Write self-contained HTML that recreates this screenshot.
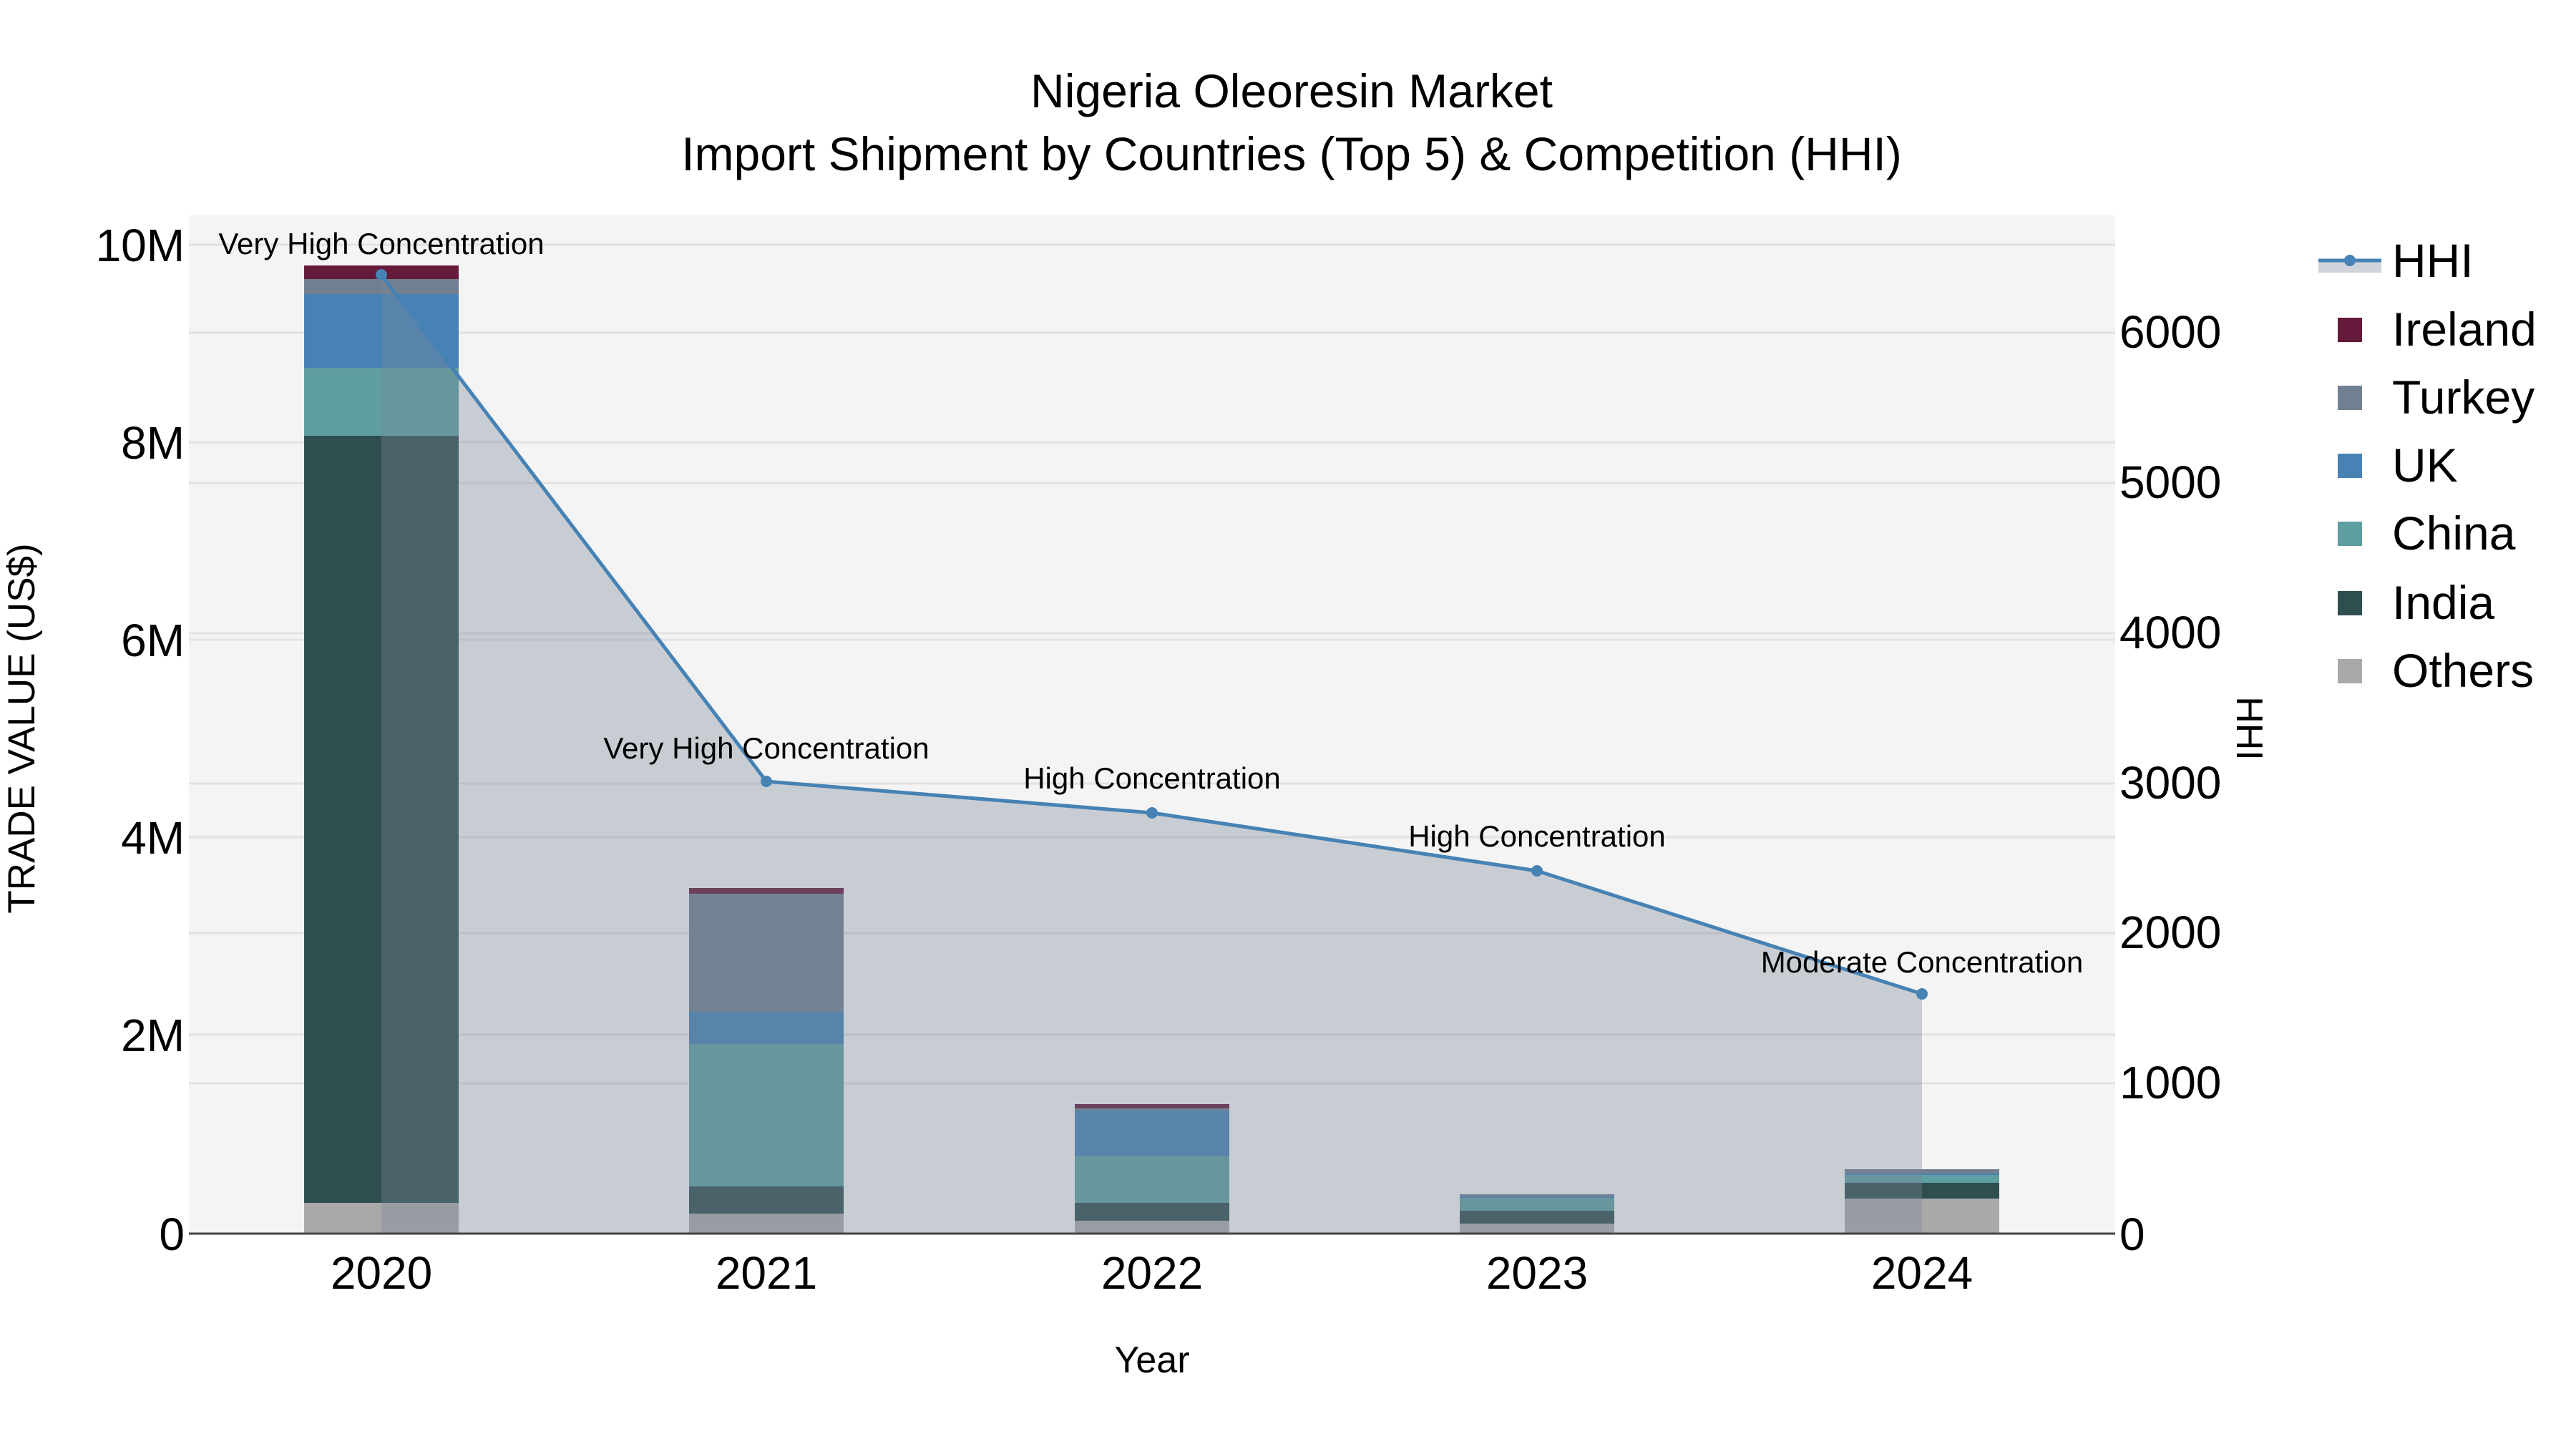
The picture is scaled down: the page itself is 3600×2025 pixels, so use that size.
<!DOCTYPE html>
<html><head><meta charset="utf-8"><style>
html,body{margin:0;padding:0;background:#fff}
svg{display:block}
text{font-family:"Liberation Sans",sans-serif;fill:#000}
</style></head><body>
<svg width="3600" height="2025" viewBox="0 0 3600 2025" xmlns="http://www.w3.org/2000/svg">
<rect width="3600" height="2025" fill="#fff"/>
<rect x="264" y="301" width="2692" height="1423" fill="#f4f4f4"/>
<g stroke="#e2e2e2" stroke-width="3">
<line x1="264" x2="2956" y1="342" y2="342"/>
<line x1="264" x2="2956" y1="618" y2="618"/>
<line x1="264" x2="2956" y1="894" y2="894"/>
<line x1="264" x2="2956" y1="1170" y2="1170"/>
<line x1="264" x2="2956" y1="1446" y2="1446"/>
<line x1="264" x2="2956" y1="1514" y2="1514"/>
<line x1="264" x2="2956" y1="1304" y2="1304"/>
<line x1="264" x2="2956" y1="1095" y2="1095"/>
<line x1="264" x2="2956" y1="885" y2="885"/>
<line x1="264" x2="2956" y1="675" y2="675"/>
<line x1="264" x2="2956" y1="465" y2="465"/>
</g>
<g>
<rect x="425" y="1681" width="216" height="43" fill="#a9a9a9"/>
<rect x="425" y="609" width="216" height="1072" fill="#2f4f4f"/>
<rect x="425" y="514" width="216" height="95" fill="#5f9ea0"/>
<rect x="425" y="411" width="216" height="103" fill="#4682b4"/>
<rect x="425" y="390" width="216" height="21" fill="#708090"/>
<rect x="425" y="371" width="216" height="19" fill="#651a3b"/>
<rect x="963" y="1696" width="216" height="28" fill="#a9a9a9"/>
<rect x="963" y="1658" width="216" height="38" fill="#2f4f4f"/>
<rect x="963" y="1459" width="216" height="199" fill="#5f9ea0"/>
<rect x="963" y="1414" width="216" height="45" fill="#4682b4"/>
<rect x="963" y="1249" width="216" height="165" fill="#708090"/>
<rect x="963" y="1241" width="216" height="8" fill="#651a3b"/>
<rect x="1502" y="1706" width="216" height="18" fill="#a9a9a9"/>
<rect x="1502" y="1681" width="216" height="25" fill="#2f4f4f"/>
<rect x="1502" y="1616" width="216" height="65" fill="#5f9ea0"/>
<rect x="1502" y="1552" width="216" height="64" fill="#4682b4"/>
<rect x="1502" y="1549" width="216" height="3" fill="#708090"/>
<rect x="1502" y="1543" width="216" height="6" fill="#651a3b"/>
<rect x="2040" y="1710" width="216" height="14" fill="#a9a9a9"/>
<rect x="2040" y="1692" width="216" height="18" fill="#2f4f4f"/>
<rect x="2040" y="1674" width="216" height="18" fill="#5f9ea0"/>
<rect x="2040" y="1672" width="216" height="2" fill="#4682b4"/>
<rect x="2040" y="1669" width="216" height="3" fill="#708090"/>
<rect x="2578" y="1675" width="216" height="49" fill="#a9a9a9"/>
<rect x="2578" y="1653" width="216" height="22" fill="#2f4f4f"/>
<rect x="2578" y="1642" width="216" height="11" fill="#5f9ea0"/>
<rect x="2578" y="1640" width="216" height="2" fill="#4682b4"/>
<rect x="2578" y="1634" width="216" height="6" fill="#708090"/>
</g>
<polygon points="533,384 1071,1092 1610,1136 2148,1217 2686,1389 2686,1724 533,1724" fill="rgb(122,135,155)" fill-opacity="0.36"/>
<line x1="264" x2="2956" y1="1724" y2="1724" stroke="#444" stroke-width="3"/>
<polyline points="533,384 1071,1092 1610,1136 2148,1217 2686,1389" fill="none" stroke="#4682b4" stroke-width="5"/>
<g fill="#4682b4">
<circle cx="533" cy="384" r="8"/><circle cx="1071" cy="1092" r="8"/><circle cx="1610" cy="1136" r="8"/><circle cx="2148" cy="1217" r="8"/><circle cx="2686" cy="1389" r="8"/>
</g>
<g font-size="42" text-anchor="middle">
<text x="533" y="355">Very High Concentration</text>
<text x="1071" y="1060">Very High Concentration</text>
<text x="1610" y="1102">High Concentration</text>
<text x="2148" y="1183">High Concentration</text>
<text x="2686" y="1359">Moderate Concentration</text>
</g>
<g font-size="66" text-anchor="middle" fill="#222">
<text x="1805" y="150">Nigeria Oleoresin Market</text>
<text x="1805" y="238">Import Shipment by Countries (Top 5) &amp; Competition (HHI)</text>
</g>
<g font-size="64" text-anchor="end">
<text x="258" y="365">10M</text>
<text x="258" y="641">8M</text>
<text x="258" y="917">6M</text>
<text x="258" y="1193">4M</text>
<text x="258" y="1469">2M</text>
<text x="258" y="1747">0</text>
</g>
<g font-size="64" text-anchor="start">
<text x="2962" y="486">6000</text>
<text x="2962" y="696">5000</text>
<text x="2962" y="906">4000</text>
<text x="2962" y="1116">3000</text>
<text x="2962" y="1325">2000</text>
<text x="2962" y="1535">1000</text>
<text x="2962" y="1747">0</text>
</g>
<g font-size="64" text-anchor="middle">
<text x="533" y="1801">2020</text>
<text x="1071" y="1801">2021</text>
<text x="1610" y="1801">2022</text>
<text x="2148" y="1801">2023</text>
<text x="2686" y="1801">2024</text>
</g>
<text x="1610" y="1918" font-size="52" text-anchor="middle" fill="#222">Year</text>
<text transform="translate(48,1018) rotate(-90)" font-size="53" text-anchor="middle" fill="#222">TRADE VALUE (US$)</text>
<text transform="translate(3126,1018) rotate(90)" font-size="52" text-anchor="middle" fill="#222">HHI</text>
<rect x="3240" y="364" width="88" height="17" fill="rgb(122,135,155)" fill-opacity="0.36"/>
<line x1="3240" x2="3328" y1="364" y2="364" stroke="#4682b4" stroke-width="5"/>
<circle cx="3284" cy="364" r="8" fill="#4682b4"/>
<rect x="3267" y="444" width="34" height="34" fill="#651a3b"/>
<rect x="3267" y="539" width="34" height="34" fill="#708090"/>
<rect x="3267" y="634" width="34" height="34" fill="#4682b4"/>
<rect x="3267" y="729" width="34" height="34" fill="#5f9ea0"/>
<rect x="3267" y="826" width="34" height="34" fill="#2f4f4f"/>
<rect x="3267" y="921" width="34" height="34" fill="#a9a9a9"/>
<g font-size="66">
<text x="3343" y="387">HHI</text>
<text x="3343" y="483">Ireland</text>
<text x="3343" y="578">Turkey</text>
<text x="3343" y="673">UK</text>
<text x="3343" y="768">China</text>
<text x="3343" y="865">India</text>
<text x="3343" y="960">Others</text>
</g>
</svg>
</body></html>
